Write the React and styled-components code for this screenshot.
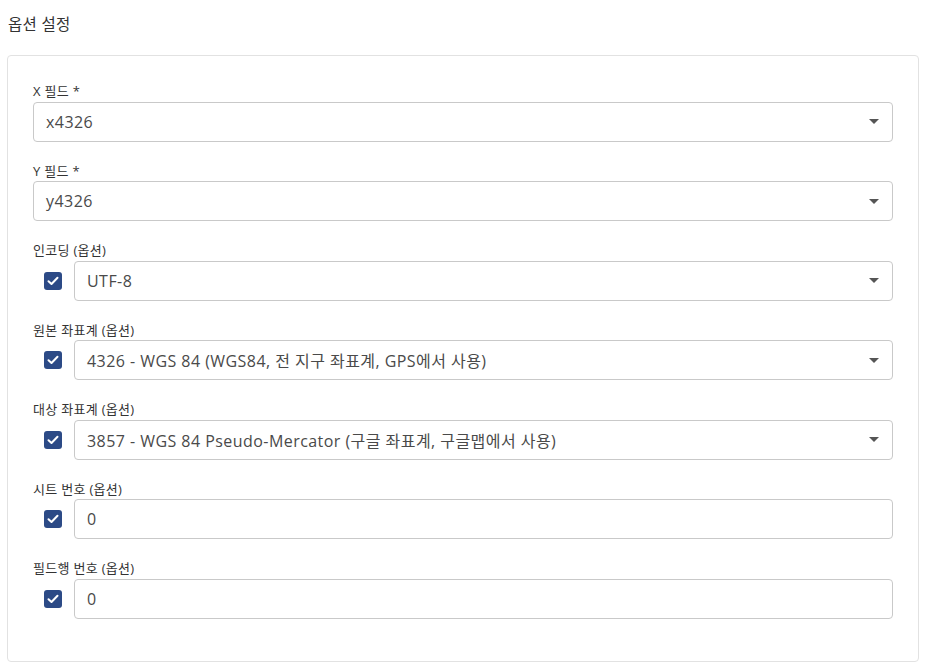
import React from "react";
import styled, { createGlobalStyle } from "styled-components";

const Global = createGlobalStyle`
  html, body { margin: 0; padding: 0; background: #fff; }
  body { font-family: "Open Sans", "Noto Sans CJK KR", sans-serif; color: #333; }
  * { box-sizing: border-box; }
`;

const Page = styled.div`
  padding: 13px 12px 0 7px;
  width: 931px;
`;

const Title = styled.h2`
  margin: 0 0 20px 1px;
  font-size: 15.5px;
  line-height: 22px;
  font-weight: 400;
  letter-spacing: 0.3px;
  color: #333;
`;

const Card = styled.div`
  border: 1px solid #e2e2e2;
  border-radius: 4px;
  padding: 26px 25px 42px 25px;
  display: flex;
  flex-direction: column;
  gap: 20px;
`;

const Field = styled.div`
  display: flex;
  flex-direction: column;
`;

const Label = styled.label`
  font-size: 13px;
  line-height: 18.5px;
  margin-bottom: 1px;
  letter-spacing: 0.3px;
  color: #333;
`;

const Row = styled.div`
  display: flex;
  align-items: center;
  gap: 12px;
`;

const Box = styled.span`
  width: 18px;
  height: 18px;
  margin-left: 11px;
  border-radius: 3px;
  background: #2c4a86;
  display: inline-flex;
  align-items: center;
  justify-content: center;
  flex: none;
`;

const Control = styled.div`
  flex: 1;
  height: 40px;
  border: 1px solid #c9c9c9;
  border-radius: 4px;
  padding: 0 13px 0 12px;
  display: flex;
  align-items: center;
  justify-content: space-between;
  font-size: 16px;
  letter-spacing: 0.45px;
  color: #4a4a4a;
`;

const Caret = styled.span`
  width: 0;
  height: 0;
  border-left: 5px solid transparent;
  border-right: 5px solid transparent;
  border-top: 5px solid #555;
`;

const Check = () => (
  <Box>
    <svg width="12" height="10" viewBox="0 0 12 10">
      <path d="M1.5 5.2 L4.5 8 L10.5 1.8" fill="none" stroke="#fff" strokeWidth="2" strokeLinecap="round" strokeLinejoin="round" />
    </svg>
  </Box>
);

const fields = [
  { label: "X 필드 *", value: "x4326", select: true },
  { label: "Y 필드 *", value: "y4326", select: true },
  { label: "인코딩 (옵션)", value: "UTF-8", select: true, check: true },
  { label: "원본 좌표계 (옵션)", value: "4326 - WGS 84 (WGS84, 전 지구 좌표계, GPS에서 사용)", select: true, check: true },
  { label: "대상 좌표계 (옵션)", value: "3857 - WGS 84 Pseudo-Mercator (구글 좌표계, 구글맵에서 사용)", select: true, check: true },
  { label: "시트 번호 (옵션)", value: "0", check: true },
  { label: "필드행 번호 (옵션)", value: "0", check: true },
];

export default function App() {
  return (
    <Page>
      <Global />
      <Title>옵션 설정</Title>
      <Card>
        {fields.map((f) => (
          <Field key={f.label}>
            <Label>{f.label}</Label>
            <Row>
              {f.check && <Check />}
              <Control>
                <span>{f.value}</span>
                {f.select && <Caret />}
              </Control>
            </Row>
          </Field>
        ))}
      </Card>
    </Page>
  );
}
